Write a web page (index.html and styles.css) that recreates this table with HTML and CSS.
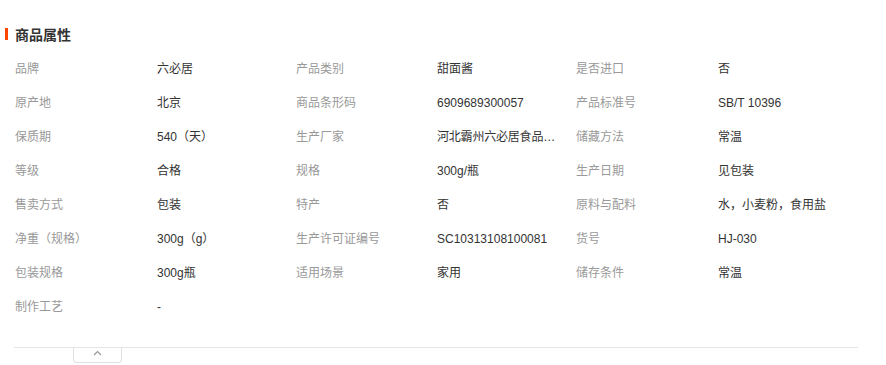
FILE: index.html
```html
<!DOCTYPE html>
<html lang="zh-CN">
<head>
<meta charset="utf-8">
<title>商品属性</title>
<link rel="stylesheet" href="styles.css">
</head>
<body>
<div class="panel">
  <div class="title">商品属性</div>
  <div class="grid">
    <div class="k">品牌</div><div class="v">六必居</div>
    <div class="k">产品类别</div><div class="v">甜面酱</div>
    <div class="k">是否进口</div><div class="v">否</div>

    <div class="k">原产地</div><div class="v">北京</div>
    <div class="k">商品条形码</div><div class="v">6909689300057</div>
    <div class="k">产品标准号</div><div class="v">SB/T 10396</div>

    <div class="k">保质期</div><div class="v">540（天）</div>
    <div class="k">生产厂家</div><div class="v trunc" title="河北霸州六必居食品有限公司">河北霸州六必居食品有限公司</div>
    <div class="k">储藏方法</div><div class="v">常温</div>

    <div class="k">等级</div><div class="v">合格</div>
    <div class="k">规格</div><div class="v">300g/瓶</div>
    <div class="k">生产日期</div><div class="v">见包装</div>

    <div class="k">售卖方式</div><div class="v">包装</div>
    <div class="k">特产</div><div class="v">否</div>
    <div class="k">原料与配料</div><div class="v">水，小麦粉，食用盐</div>

    <div class="k">净重（规格）</div><div class="v">300g（g）</div>
    <div class="k">生产许可证编号</div><div class="v">SC10313108100081</div>
    <div class="k">货号</div><div class="v">HJ-030</div>

    <div class="k">包装规格</div><div class="v">300g瓶</div>
    <div class="k">适用场景</div><div class="v">家用</div>
    <div class="k">储存条件</div><div class="v">常温</div>

    <div class="k">制作工艺</div><div class="v">-</div>
  </div>
  <div class="divider"></div>
  <div class="toggle">
    <svg width="9" height="6" viewBox="0 0 9 6"><polyline points="1,5 4.5,1.5 8,5" fill="none" stroke="#999" stroke-width="1.2"/></svg>
  </div>
</div>
</body>
</html>
```

FILE: styles.css
```css
html, body {
  margin: 0;
  padding: 0;
  background: #fff;
}
body {
  font-family: "Liberation Sans", "Noto Sans CJK SC", sans-serif;
  font-size: 12px;
  color: #333;
}
.panel {
  width: 886px;
}
.title {
  display: flex;
  align-items: center;
  height: 20px;
  margin-top: 24px;
  padding-left: 5px;
  font-size: 14px;
  font-weight: bold;
  color: #333;
}
.title::before {
  content: "";
  width: 3px;
  height: 12px;
  background: #f40;
  margin-right: 7px;
}
.grid {
  display: grid;
  grid-template-columns: 142px 139px 141px 139px 142px 140px;
  grid-auto-rows: 34px;
  margin: 8px 0 0 15px;
}
.k, .v {
  line-height: 34px;
  white-space: nowrap;
  overflow: hidden;
  text-overflow: ellipsis;
}
.k {
  color: #999;
}
.v {
  color: #333;
  max-width: 130px;
}
.v.trunc {
  max-width: 124px;
  letter-spacing: -0.2px;
}
.divider {
  margin: 23px 0 0 14px;
  width: 844px;
  border-top: 1px solid #e5e5e5;
}
.toggle {
  margin-left: 73px;
  width: 47px;
  height: 12px;
  border: 1px solid #e0e0e0;
  border-top: none;
  border-radius: 0 0 4px 4px;
  display: flex;
  justify-content: center;
  align-items: flex-start;
  padding-top: 2px;
  box-sizing: content-box;
}
```
